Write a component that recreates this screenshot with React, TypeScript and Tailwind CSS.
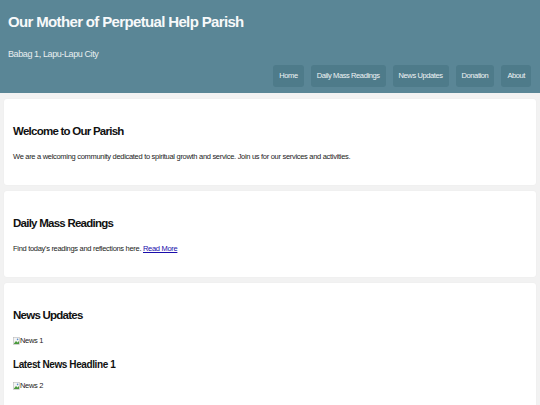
import React from 'react';

const navItems = ['Home', 'Daily Mass Readings', 'News Updates', 'Donation', 'About'];

const BrokenImage = ({ alt }: { alt: string }) => (
  <div className="flex items-center h-[10px] text-[7.5px] leading-[10px] tracking-[-0.3px] text-[#222]">
    <svg width="7" height="8" viewBox="0 0 7 8">
      <rect x="0.5" y="0.5" width="6" height="7" fill="#f4f4f4" stroke="#b8b8b8" strokeWidth="0.6" />
      <path d="M1 6.5 L3 4 L4.5 5.5 L6 4 L6 7 L1 7 Z" fill="#4a9a3c" />
      <circle cx="4.6" cy="2.4" r="0.8" fill="#5a8fd0" />
    </svg>
    <span>{alt}</span>
  </div>
);

const Card = ({ children }: { children: React.ReactNode }) => (
  <section className="bg-white rounded-[3px] px-[9px] pt-6 pb-[23px] shadow-[0_0_2px_rgba(0,0,0,0.04)]">
    {children}
  </section>
);

const CardTitle = ({ children }: { children: React.ReactNode }) => (
  <h2 className="text-[11.5px] leading-4 font-bold tracking-[-0.75px] text-[#111] mb-[13px]">{children}</h2>
);

export default function App() {
  return (
    <div className="min-h-[405px] bg-[#f2f2f2] font-['Liberation_Sans',Arial,sans-serif]">
      <header className="bg-[#5a8696] px-2 pt-3 pb-[6px] text-white">
        <h1 className="text-[15px] leading-5 font-bold tracking-[-0.65px] text-[#f7f9fa]">
          Our Mother of Perpetual Help Parish
        </h1>
        <p className="mt-[16px] text-[9px] leading-[13px] tracking-[-0.4px] text-[#e8eef0]">
          Babag 1, Lapu-Lapu City
        </p>
        <nav className="mt-[4px] flex justify-end gap-[7px] pr-px">
          {navItems.map((item) => (
            <a
              key={item}
              href="#"
              className="h-[22px] px-[6px] flex items-center rounded-[3px] bg-[#4e7b8a] text-[7.5px] tracking-[-0.4px] text-[#eef3f5]"
            >
              {item}
            </a>
          ))}
        </nav>
      </header>

      <main className="px-1 pt-[6px] flex flex-col gap-[6px]">
        <Card>
          <CardTitle>Welcome to Our Parish</CardTitle>
          <p className="text-[7.5px] leading-[10px] tracking-[-0.3px] text-[#222]">
            We are a welcoming community dedicated to spiritual growth and service. Join us for our services and activities.
          </p>
        </Card>

        <Card>
          <CardTitle>Daily Mass Readings</CardTitle>
          <p className="text-[7.5px] leading-[10px] tracking-[-0.3px] text-[#222]">
            Find today's readings and reflections here.{' '}
            <a href="#" className="text-[#1a0dab] underline">
              Read More
            </a>
          </p>
        </Card>

        <Card>
          <CardTitle>News Updates</CardTitle>
          <div className="flex flex-col">
            <BrokenImage alt="News 1" />
            <h3 className="mt-[13px] text-[10px] leading-3 font-bold tracking-[-0.4px] text-[#111]">
              Latest News Headline 1
            </h3>
            <div className="mt-[10px]">
              <BrokenImage alt="News 2" />
            </div>
          </div>
        </Card>
      </main>
    </div>
  );
}
